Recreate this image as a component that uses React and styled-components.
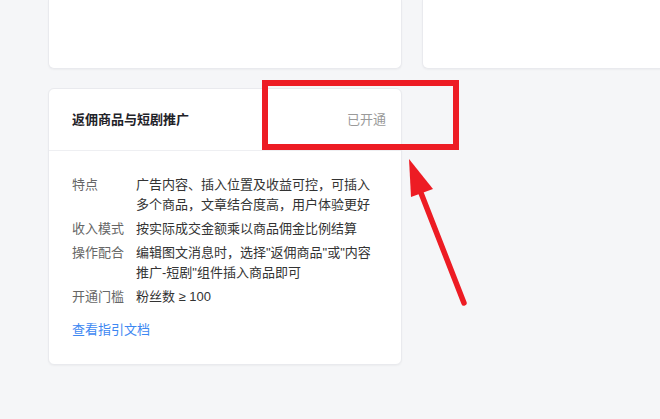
import React from 'react';
import styled, { createGlobalStyle } from 'styled-components';

const GlobalStyle = createGlobalStyle`
  html, body {
    margin: 0;
    padding: 0;
    background: #f5f6f8;
    overflow: hidden;
  }
  body {
    font-family: "Liberation Sans", "Noto Sans CJK SC", sans-serif;
    -webkit-font-smoothing: antialiased;
  }
`;

// Scoped styles

const Page = styled.div`
  position: relative;
  width: 660px;
  height: 419px;
  overflow: hidden;
`;

const Grid = styled.div`
  display: grid;
  grid-template-columns: 354px 354px;
  grid-template-rows: 69px auto;
  column-gap: 20px;
  row-gap: 19px;
  padding-left: 48px;
`;

const Card = styled.section`
  box-sizing: border-box;
  background: #fff;
  border: 1px solid #e9eaee;
  border-radius: 6px;
  box-shadow: 0 1px 2px rgba(0, 0, 0, 0.04);
  ${({ $cut }) => $cut && `
    border-top: none;
    border-radius: 0 0 6px 6px;
  `}
`;

const CardHeader = styled.header`
  display: flex;
  align-items: center;
  justify-content: space-between;
  height: 62px;
  padding: 0 15px 3px 23px;
  box-sizing: border-box;
  border-bottom: 1px solid #eeeff2;
`;

const Title = styled.h3`
  margin: 0;
  font-size: 13px;
  font-weight: 700;
  color: #1f2329;
`;

const Status = styled.span`
  font-size: 13px;
  color: #9a9a9a;
`;

const CardBody = styled.div`
  display: grid;
  row-gap: 4px;
  padding: 24px 24px 24px 23px;
`;

const Row = styled.div`
  display: grid;
  grid-template-columns: 64px 250px;
  font-size: 13px;
  line-height: 20px;
`;

const Label = styled.span`
  color: #666;
`;

const Value = styled.span`
  color: #333;
`;

const DocLink = styled.a`
  margin-top: 9px;
  font-size: 13px;
  line-height: 20px;
  color: #3d88f2;
  text-decoration: none;
`;

const Highlight = styled.div`
  position: absolute;
  left: 262px;
  top: 80px;
  width: 197px;
  height: 70px;
  box-sizing: border-box;
  border: 6.5px solid #ed1c24;
`;

const Arrow = styled.svg`
  position: absolute;
  left: 0;
  top: 0;
  pointer-events: none;
`;

const rows = [
  ['特点', <>广告内容、插入位置及收益可控，可插入<br />多个商品，文章结合度高，用户体验更好</>],
  ['收入模式', '按实际成交金额乘以商品佣金比例结算'],
  ['操作配合', <>编辑图文消息时，选择"返佣商品"或"内容<br />推广-短剧"组件插入商品即可</>],
  ['开通门槛', '粉丝数 ≥ 100'],
];

// Main Component

const App = () => (
  <Page>
    <GlobalStyle />
    <Grid>
      <Card $cut />
      <Card $cut />
      <Card>
        <CardHeader>
          <Title>返佣商品与短剧推广</Title>
          <Status>已开通</Status>
        </CardHeader>
        <CardBody>
          {rows.map(([label, value]) => (
            <Row key={label}>
              <Label>{label}</Label>
              <Value>{value}</Value>
            </Row>
          ))}
          <DocLink href="#">查看指引文档</DocLink>
        </CardBody>
      </Card>
    </Grid>
    <Highlight />
    <Arrow width="660" height="419" viewBox="0 0 660 419">
      <line x1="421" y1="193" x2="464" y2="303" stroke="#ed1c24" strokeWidth="5.5" strokeLinecap="round" />
      <polygon points="409,159 411,197 433,189" fill="#ed1c24" />
    </Arrow>
  </Page>
);

export default App;
